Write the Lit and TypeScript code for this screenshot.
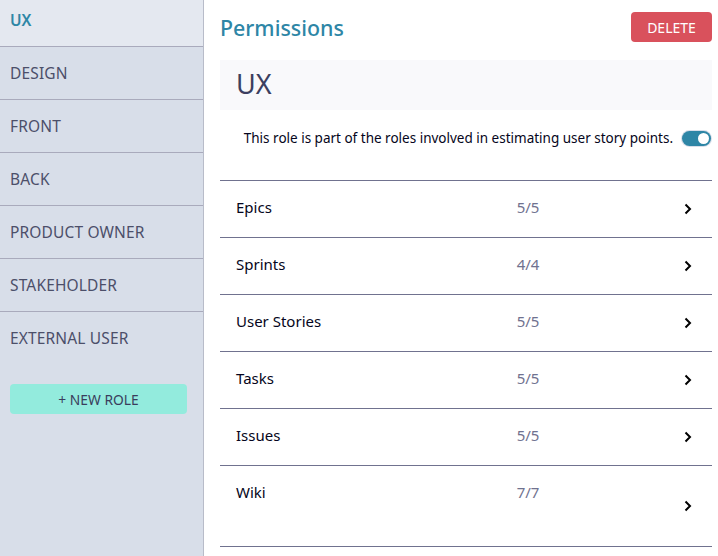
import { LitElement, html, css } from "lit";
import { customElement } from "lit/decorators.js";

const ROLES = ["UX", "DESIGN", "FRONT", "BACK", "PRODUCT OWNER", "STAKEHOLDER", "EXTERNAL USER"];
const PERMS = [
  ["Epics", "5/5"],
  ["Sprints", "4/4"],
  ["User Stories", "5/5"],
  ["Tasks", "5/5"],
  ["Issues", "5/5"],
  ["Wiki", "7/7"],
];

@customElement("app-root")
export class AppRoot extends LitElement {
  static styles = css`
    :host {
      display: flex;
      width: 718px;
      height: 556px;
      overflow: hidden;
      font-family: "Noto Sans", sans-serif;
      background: #fff;
    }

    .sidebar {
      width: 203px;
      flex: none;
      background: #d8dee9;
      border-right: 1px solid #b8bcc9;
    }

    .role {
      height: 53px;
      box-sizing: border-box;
      display: flex;
      align-items: center;
      padding: 0 0 1px 10px;
      border-bottom: 1px solid #a9aabc;
      font-size: 15.5px;
      letter-spacing: 0.15px;
      color: #4c4f69;
    }

    .role.active {
      height: 47px;
      padding-bottom: 7px;
      background: #e4e8f0;
      color: #2e86a6;
      font-size: 15.5px;
      letter-spacing: 0;
      font-weight: 600;
    }

    .role.last {
      height: 52px;
      border-bottom: none;
    }

    .new-role {
      margin: 20px 16px 0 10px;
      height: 30px;
      border-radius: 4px;
      background: #93ebdd;
      color: #3a3d5c;
      font-size: 13.8px;
      display: flex;
      align-items: center;
      justify-content: center;
    }

    .main {
      flex: 1;
      padding: 12px 6px 0 16px;
    }

    .header {
      display: flex;
      justify-content: space-between;
      align-items: center;
      height: 30px;
      margin-bottom: 18px;
    }

    h1 {
      margin: 0;
      font-size: 21.4px;
      font-weight: 500;
      color: #2e86a6;
    }

    .delete {
      width: 81px;
      height: 30px;
      border-radius: 4px;
      background: #d9515c;
      color: #fff;
      font-size: 14px;
      display: flex;
      align-items: center;
      justify-content: center;
    }

    .name {
      height: 50px;
      box-sizing: border-box;
      background: #f9f9fb;
      padding: 0 0 3px 16px;
      display: flex;
      align-items: center;
      font-size: 27px;
      color: #3c3f60;
    }

    .estimate {
      display: flex;
      justify-content: flex-end;
      align-items: center;
      gap: 9px;
      height: 56px;
      margin-bottom: 14px;
      font-size: 13.5px;
      color: #050520;
    }

    .toggle {
      width: 29px;
      height: 15px;
      border-radius: 8px;
      background: #2e86a6;
      box-shadow: 0 0 0 1px #d8dee9;
      display: flex;
      align-items: center;
      justify-content: flex-end;
      padding-right: 2px;
      box-sizing: border-box;
      margin-right: 1px;
    }

    .knob {
      width: 11px;
      height: 11px;
      border-radius: 50%;
      background: #fff;
    }

    .rows {
      border-top: 1px solid #70728f;
    }

    .row {
      height: 56px;
      border-bottom: 1px solid #70728f;
      display: grid;
      grid-template-columns: 252px 80px 1fr;
      padding: 0 20px 0 16px;
      font-size: 15px;
      color: #050520;
      align-items: start;
    }

    .row.tall {
      height: 80px;
    }

    .row span {
      padding-top: 16px;
    }

    .count {
      text-align: center;
      color: #70728f;
    }

    .chev {
      justify-self: end;
      align-self: center;
      display: block;
    }
  `;

  render() {
    return html`
      <nav class="sidebar">
        ${ROLES.map(
          (r, i) =>
            html`<div class="role ${i === 0 ? "active" : ""} ${i === ROLES.length - 1 ? "last" : ""}">${r}</div>`
        )}
        <div class="new-role">+ NEW ROLE</div>
      </nav>
      <section class="main">
        <div class="header">
          <h1>Permissions</h1>
          <div class="delete">DELETE</div>
        </div>
        <div class="name">UX</div>
        <div class="estimate">
          This role is part of the roles involved in estimating user story points.
          <div class="toggle"><div class="knob"></div></div>
        </div>
        <div class="rows">
          ${PERMS.map(
            ([n, c]) => html`
              <div class="row ${n === "Wiki" ? "tall" : ""}">
                <span>${n}</span>
                <span class="count">${c}</span>
                <svg class="chev" width="8" height="12" viewBox="0 0 8 12">
                  <path d="M1.5 1.5 L6 6 L1.5 10.5" fill="none" stroke="#000" stroke-width="2" />
                </svg>
              </div>
            `
          )}
        </div>
      </section>
    `;
  }
}
